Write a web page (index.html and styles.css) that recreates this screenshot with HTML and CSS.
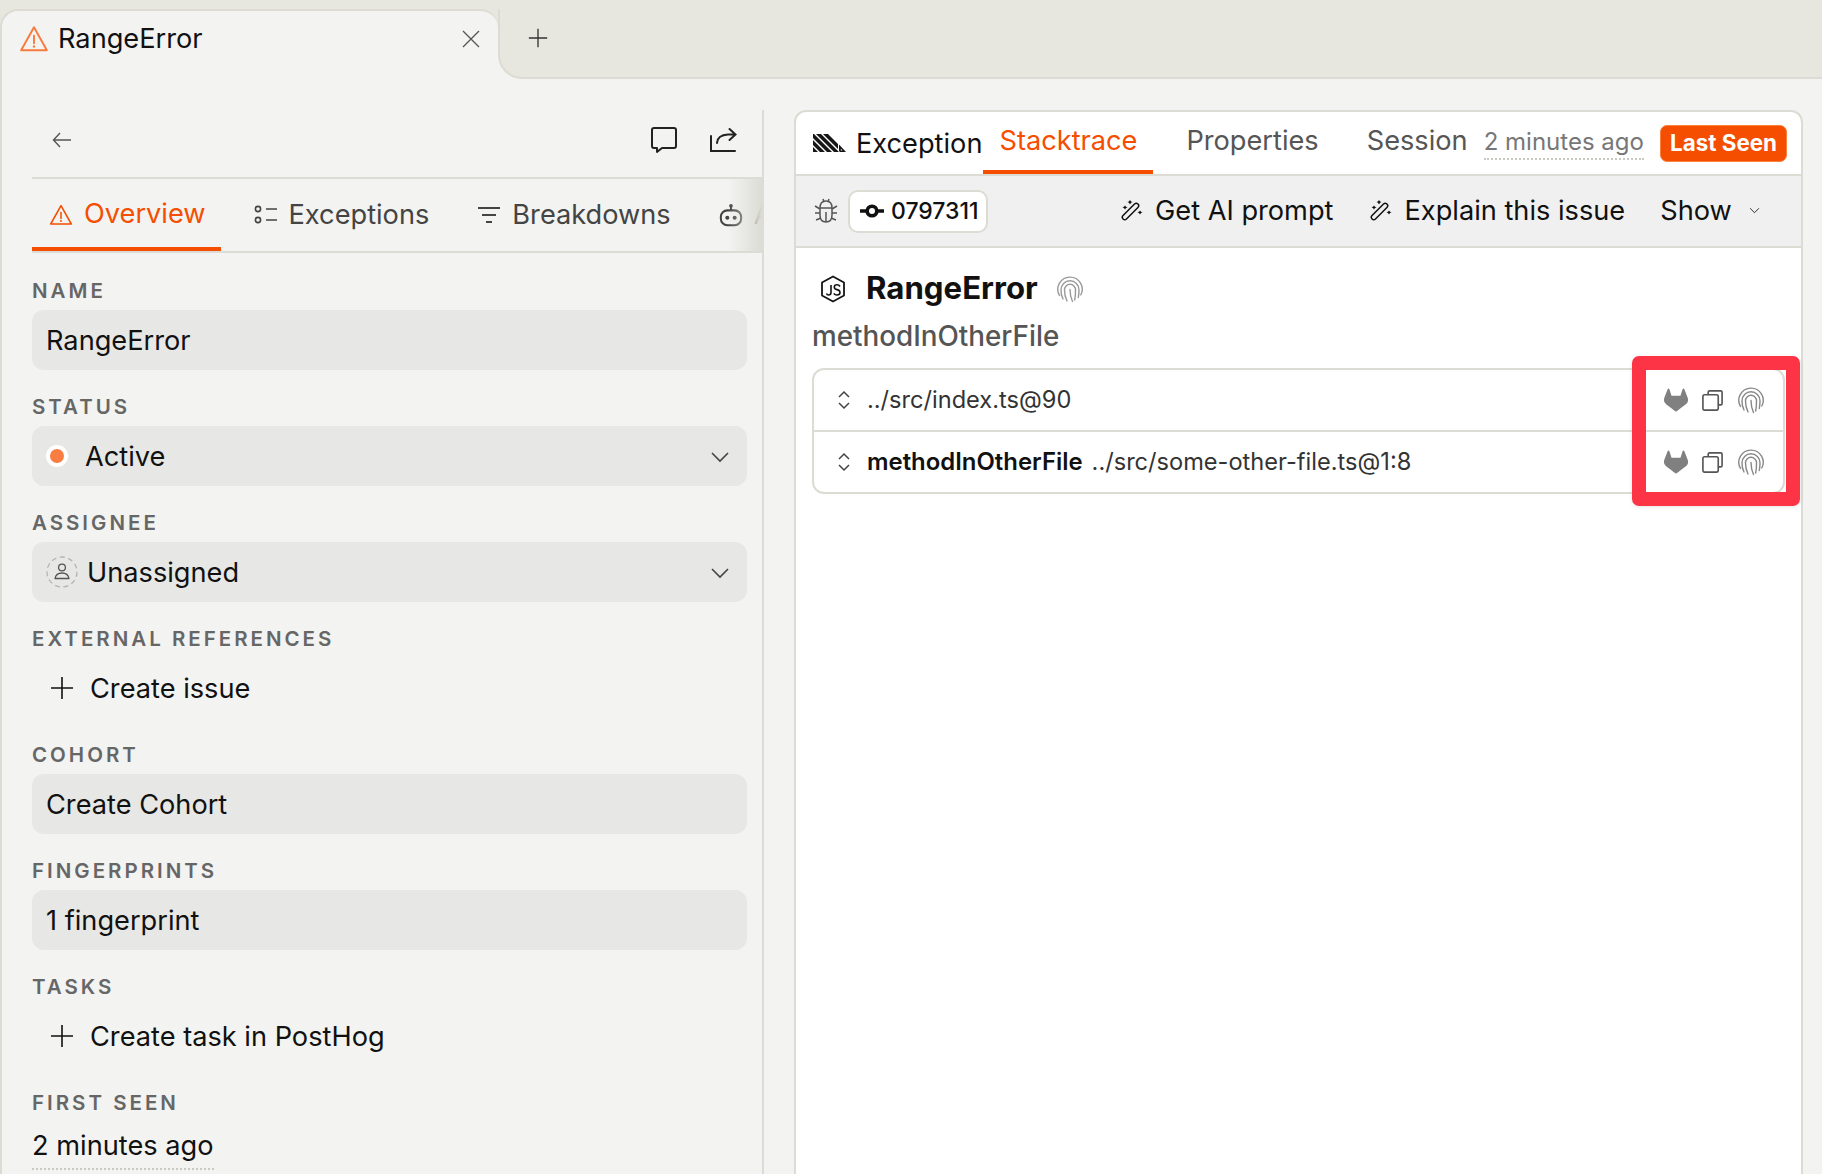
FILE: index.html
```html
<!DOCTYPE html>
<html lang="en">
	<head>
		<meta charset="UTF-8" />
		<title>RangeError</title>
		<link rel="stylesheet" href="styles.css">
	</head>
	<body>
		<svg class="defs" width="0" height="0">
			<defs>
				<symbol id="warn" viewBox="0 0 28 28">
					<path d="M14 3 L26 24.5 H2 Z" fill="none" stroke="currentColor" stroke-width="1.8" stroke-linejoin="round"/>
					<path d="M14 11 V18" stroke="currentColor" stroke-width="1.8" stroke-linecap="round"/>
					<circle cx="14" cy="21" r="1.1" fill="currentColor"/>
				</symbol>
				<symbol id="plus" viewBox="0 0 24 24">
					<path d="M12 1 V23 M1 12 H23" fill="none" stroke="currentColor" stroke-width="1.6"/>
				</symbol>
				<symbol id="chevron" viewBox="0 0 20 12">
					<path d="M2 2 L10 10 L18 2" fill="none" stroke="currentColor" stroke-width="1.6"/>
				</symbol>
				<symbol id="wand" viewBox="0 0 22 22">
					<rect x="-10.5" y="-2.4" width="21" height="4.8" rx="2.4" transform="translate(9.5 11.5) rotate(-45)" fill="none" stroke="currentColor" stroke-width="1.5"/>
					<path fill="currentColor" d="M9 0 L10 1.5 L11.5 2 L10 2.8 L9 4.5 L8 2.8 L6.5 2 L8 1.5 Z M4 5.5 L5 6.8 L6.5 7.3 L5 8 L4 9.5 L3 8 L1.5 7.3 L3 6.8 Z M19 10.5 L20 11.8 L21.5 12.3 L20 13 L19 14.5 L18 13 L16.5 12.3 L18 11.8 Z"/>
				</symbol>
				<symbol id="print" viewBox="0 0 28 28">
					<g fill="none" stroke="currentColor" stroke-width="1.4" stroke-linecap="round">
						<path d="M3.5 20.5 A12.2 12.2 0 1 1 24.8 20"/>
						<path d="M7 24 Q4.8 20 5 14.8 A9 9 0 0 1 23 14.8 Q23 18.5 22.3 22.5"/>
						<path d="M11 26 Q8.4 21 8.5 14.8 A5.5 5.5 0 0 1 19.5 14.8 Q19.6 20 18.7 25"/>
						<path d="M14 14.5 Q14 21 16.5 26.5"/>
					</g>
				</symbol>
				<symbol id="gitlab" viewBox="0 0 24 24">
					<path fill="currentColor" d="M23.6 9.6 L23.57 9.5 20.3 1 a.85.85 0 0 0-1.62.09 L16.47 7.85 H7.53 L5.32 1.09 a.85.85 0 0 0-1.62-.09 L.43 9.5 .4 9.6 a6.07 6.07 0 0 0 2.01 7.01 L7.4 20.35 9.86 22.2 l1.5 1.13 a1 1 0 0 0 1.22 0 l1.5-1.13 2.46-1.86 5.02-3.76 a6.07 6.07 0 0 0 2.04-6.98z"/>
				</symbol>
				<symbol id="copy" viewBox="0 0 24 24">
					<path d="M7.5 6 V3.5 A1.5 1.5 0 0 1 9 2 H20.5 A1.5 1.5 0 0 1 22 3.5 V15 A1.5 1.5 0 0 1 20.5 16.5 H18" fill="none" stroke="currentColor" stroke-width="1.7"/>
					<rect x="2" y="6" width="16" height="16" rx="1.8" fill="none" stroke="currentColor" stroke-width="1.7"/>
				</symbol>
				<symbol id="updown" viewBox="0 0 14 20">
					<path d="M2 7 L7 2 L12 7 M2 13 L7 18 L12 13" fill="none" stroke="currentColor" stroke-width="1.5"/>
				</symbol>
			</defs>
		</svg>

		<div class="tabbar">
			<div class="tab">
				<svg class="tab-warn"><use href="#warn"/></svg>
				<span class="tab-title">RangeError</span>
				<svg class="tab-close" viewBox="0 0 18 18"><path d="M1 1 L17 17 M17 1 L1 17" fill="none" stroke="currentColor" stroke-width="1.3"/></svg>
			</div>
			<div class="tab-rest">
				<svg class="tab-plus"><use href="#plus"/></svg>
			</div>
		</div>

		<div class="main">
			<div class="side">
				<div class="side-top">
					<svg class="back" viewBox="0 0 20 16"><path d="M8 1 L1.5 8 L8 15 M1.5 8 H19" fill="none" stroke="currentColor" stroke-width="1.4"/></svg>
					<div class="side-actions">
						<svg class="act" viewBox="0 0 28 28"><path d="M2 4 Q2 2 4 2 H24 Q26 2 26 4 V20 Q26 22 24 22 H12 L7 26 V22 H4 Q2 22 2 20 Z" fill="none" stroke="currentColor" stroke-width="2" stroke-linejoin="round"/></svg>
						<svg class="act" viewBox="0 0 28 28"><path d="M2 10 V25 H26" fill="none" stroke="currentColor" stroke-width="2" stroke-linecap="round"/><path d="M8 17 Q8.5 9 19 8.5 H26 M20.5 3 L26.5 8.5 L20.5 14" fill="none" stroke="currentColor" stroke-width="2" stroke-linecap="round"/></svg>
					</div>
				</div>
				<div class="side-tabs">
					<div class="stab active">
						<svg class="stab-icon"><use href="#warn"/></svg>Overview
					</div>
					<div class="stab">
						<svg class="stab-icon" viewBox="0 0 24 24"><g fill="none" stroke="currentColor" stroke-width="1.6"><circle cx="4" cy="6" r="2.6"/><circle cx="4" cy="17" r="2.6"/><path d="M12 6 H23 M12 17 H23"/></g></svg>Exceptions
					</div>
					<div class="stab">
						<svg class="stab-icon" viewBox="0 0 24 24"><path d="M1 5 H23 M5 12 H19 M9 19 H15" fill="none" stroke="currentColor" stroke-width="2"/></svg>Breakdowns
					</div>
					<div class="stab">
						<svg class="stab-icon" viewBox="0 0 26 26"><g fill="none" stroke="currentColor" stroke-width="2.2"><path d="M13 3 V8"/><rect x="2" y="8" width="22" height="16" rx="7"/></g><circle cx="13" cy="3" r="2" fill="currentColor"/><circle cx="9" cy="16" r="2.2" fill="currentColor"/><circle cx="17" cy="16" r="2.2" fill="currentColor"/></svg>AI
					</div>
					<div class="fade"></div>
				</div>

				<div class="field">
					<div class="label">Name</div>
					<div class="box">RangeError</div>
				</div>
				<div class="field">
					<div class="label">Status</div>
					<div class="box">
						<span class="dot"></span><span class="status-text">Active</span>
						<svg class="chev"><use href="#chevron"/></svg>
					</div>
				</div>
				<div class="field">
					<div class="label">Assignee</div>
					<div class="box">
						<svg class="avatar" viewBox="0 0 32 32">
							<circle cx="16" cy="16" r="15" fill="none" stroke="#b5b5b0" stroke-width="1.3" stroke-dasharray="5 3.5"/>
							<circle cx="16" cy="11.5" r="3.4" fill="none" stroke="#555" stroke-width="1.3"/>
							<path d="M9 22.5 Q10 17 16 17 Q22 17 23 22.5 Z" fill="none" stroke="#555" stroke-width="1.3" stroke-linejoin="round"/>
						</svg>
						<span class="assignee-text">Unassigned</span>
						<svg class="chev"><use href="#chevron"/></svg>
					</div>
				</div>
				<div class="field">
					<div class="label">External references</div>
					<div class="box plain"><svg class="add"><use href="#plus"/></svg>Create issue</div>
				</div>
				<div class="field">
					<div class="label">Cohort</div>
					<div class="box">Create Cohort</div>
				</div>
				<div class="field">
					<div class="label">Fingerprints</div>
					<div class="box">1 fingerprint</div>
				</div>
				<div class="field">
					<div class="label">Tasks</div>
					<div class="box plain"><svg class="add"><use href="#plus"/></svg>Create task in PostHog</div>
				</div>
				<div class="field">
					<div class="label">First seen</div>
					<div class="seen"><span>2 minutes ago</span></div>
				</div>
			</div>

			<div class="card">
				<div class="card-head">
					<svg class="hog" viewBox="0 0 33 18">
						<path fill="#151515" fill-rule="evenodd" d="M0 13 L5 18 H0 Z M0 6 L12 18 H7 L0 11 Z M0 0 H1 L19 18 H14 L0 4 Z M3 0 H8 L26 18 H21 Z M10 0 H15 L25 10 V15 Z M33 18 H27 L26 17 V10.5 Z M29.5 16.5 H27.8 V14.8 Z"/>
					</svg>
					<span class="head-name">Exception</span>
					<span class="ctab active">Stacktrace</span>
					<span class="ctab props">Properties</span>
					<span class="ctab session">Session</span>
					<span class="ago">2 minutes ago</span>
					<span class="badge">Last Seen</span>
				</div>
				<div class="toolbar">
					<svg class="bug" viewBox="0 0 24 26"><g fill="none" stroke="currentColor" stroke-width="1.5"><path d="M6 10 Q6 3 12 3 Q18 3 18 10 V17 Q18 24 12 24 Q6 24 6 17 Z"/><path d="M6 10 H18 M12 14 V24 M9 1 L10 4 M15 1 L14 4 M1 8 L6 11 M23 8 L18 11 M1 15 H6 M23 15 H18 M2 22 L7 20 M22 22 L17 20"/></g></svg>
					<span class="commit">
						<svg class="commit-icon" viewBox="0 0 24 14"><circle cx="12" cy="7" r="4.8" fill="none" stroke="currentColor" stroke-width="3.6"/><path d="M0 7 H7 M17 7 H24" stroke="currentColor" stroke-width="3.6"/></svg><span class="sha">0797311</span>
					</span>
					<span class="tool first"><svg class="wand"><use href="#wand"/></svg>Get AI prompt</span>
					<span class="tool"><svg class="wand"><use href="#wand"/></svg>Explain this issue</span>
					<span class="tool show">Show<svg class="show-chev"><use href="#chevron"/></svg></span>
				</div>
				<div class="body">
					<div class="title-row">
						<svg class="js" viewBox="0 0 26 28">
							<path d="M13 1.5 L24 7.5 V20.5 L13 26.5 L2 20.5 V7.5 Z" fill="none" stroke="#151515" stroke-width="1.8" stroke-linejoin="round"/>
							<path d="M11 10 V17.5 Q11 20 8.5 20 Q7 20 6.5 18.5 M20 11.5 Q19 9.8 17 9.8 Q14.3 9.8 14.3 12 Q14.3 14 17 14.6 Q20 15.3 20 17.5 Q20 20 17 20 Q14.8 20 13.8 18.3" fill="none" stroke="#151515" stroke-width="1.6"/>
						</svg>
						<span class="title">RangeError</span>
						<svg class="title-print"><use href="#print"/></svg>
					</div>
					<div class="subtitle">methodInOtherFile</div>
					<div class="frames">
						<div class="frame">
							<svg class="updown"><use href="#updown"/></svg>
							<span class="path">../src/index.ts@90</span>
							<span class="frame-icons">
								<svg class="gitlab"><use href="#gitlab"/></svg>
								<svg class="copy"><use href="#copy"/></svg>
								<svg class="print"><use href="#print"/></svg>
							</span>
						</div>
						<div class="frame">
							<svg class="updown"><use href="#updown"/></svg>
							<strong class="method">methodInOtherFile</strong>
							<span class="path">../src/some-other-file.ts@1:8</span>
							<span class="frame-icons">
								<svg class="gitlab"><use href="#gitlab"/></svg>
								<svg class="copy"><use href="#copy"/></svg>
								<svg class="print"><use href="#print"/></svg>
							</span>
						</div>
						<div class="highlight"></div>
					</div>
				</div>
			</div>
		</div>
	</body>
</html>
```

FILE: styles.css
```css
* {
	box-sizing: border-box;
}
html, body {
	margin: 0;
	height: 1174px;
	overflow: hidden;
}
body {
	background: #f3f3f1;
	color: #111;
	font: 27.2px/1.2 Inter, "Liberation Sans", sans-serif;
	display: flex;
	flex-direction: column;
}
.defs {
	position: absolute;
}

/* browser style tabs */
.tabbar {
	height: 79px;
	flex: none;
	display: flex;
	align-items: flex-end;
	background: linear-gradient(to bottom, #e7e7df 40px, #f3f3f1 40px);
}
.tab {
	width: 498px;
	height: 70px;
	padding: 0 18px 12px 17px;
	display: flex;
	align-items: center;
	background: #f3f3f1;
	border: 2px solid #dcdcd4;
	border-bottom: 0;
	border-right: 0;
	border-radius: 18px 18px 0 0;
}
.tab-warn {
	width: 30px;
	height: 30px;
	color: #f87b3e;
	margin-right: 9px;
}
.tab-title {
	flex: 1;
}
.tab-close {
	width: 18px;
	height: 18px;
	color: #555;
}
.tab-rest {
	flex: 1;
	height: 70px;
	padding: 0 0 11px 28px;
	display: flex;
	align-items: center;
	background: #e7e7df;
	border-left: 2px solid #dcdcd4;
	border-bottom: 2px solid #dcdcd4;
	border-bottom-left-radius: 24px;
}
.tab-plus {
	width: 20px;
	height: 20px;
	color: #333;
}

.main {
	flex: 1;
	display: flex;
	min-height: 0;
	border-left: 2px solid #dcdcd4;
}

/* left column */
.side {
	width: 762px;
	flex: none;
	margin-top: 31px;
	padding-left: 30px;
	border-right: 2px solid #dcdcd4;
}
.side-top {
	height: 69px;
	padding: 0 25px 8px 20px;
	display: flex;
	align-items: center;
	justify-content: space-between;
	border-bottom: 2px solid #dcdcd4;
}
.back {
	width: 20px;
	height: 16px;
	color: #555;
}
.side-actions {
	display: flex;
	gap: 31px;
}
.act {
	width: 28px;
	height: 28px;
	color: #222;
}
.side-tabs {
	height: 74px;
	display: flex;
	overflow: hidden;
	position: relative;
	border-bottom: 2px solid #dcdcd4;
	margin-bottom: 25px;
}
.stab {
	flex: none;
	height: 72px;
	padding: 0 15px 0 17px;
	margin-right: 16px;
	display: flex;
	align-items: center;
	color: #444;
}
.stab.active {
	color: #f54e00;
	border-bottom: 4px solid #f54e00;
	padding-top: 3px;
	margin-right: 16px;
}
.stab-icon {
	width: 24px;
	height: 24px;
	margin-right: 11px;
}
.fade {
	position: absolute;
	right: 0;
	top: 0;
	bottom: 0;
	width: 34px;
	background: linear-gradient(to right, rgba(243, 243, 241, 0), #dcdcd6);
}
.field {
	padding-right: 15px;
	height: 116px;
}
.label {
	height: 24px;
	padding-top: 1px;
	font-size: 20.5px;
	line-height: 24px;
	font-weight: 600;
	letter-spacing: 3px;
	text-transform: uppercase;
	color: #666;
}
.box {
	height: 60px;
	margin-top: 8px;
	padding: 2px 17px 0 14px;
	display: flex;
	align-items: center;
	border-radius: 12px;
	background: #e7e7e5;
}
.box.plain {
	background: none;
}
.dot {
	width: 22px;
	height: 22px;
	margin-right: 17px;
	margin-top: -2px;
	border-radius: 50%;
	background: #f97c40;
	border: 4px solid #fff;
}
.status-text, .assignee-text {
	flex: 1;
}
.chev {
	width: 20px;
	height: 12px;
	color: #444;
}
.avatar {
	width: 32px;
	height: 32px;
	margin-top: -2px;
	margin-right: 9px;
}
.add {
	width: 24px;
	height: 24px;
	margin: -2px 16px 0 4px;
}
.seen {
	margin-top: 16px;
}
.seen span {
	display: inline-block;
	padding-bottom: 5px;
	border-bottom: 2px dotted #c9c9c4;
}

/* right card */
.card {
	flex: 1;
	margin: 31px 19px 0 30px;
	background: #fff;
	border: 2px solid #dcdcd4;
	border-bottom: 0;
	border-radius: 12px 12px 0 0;
	display: flex;
	flex-direction: column;
}
.card-head {
	height: 64px;
	flex: none;
	padding: 0 14px 0 17px;
	display: flex;
	align-items: center;
	border-bottom: 2px solid #dcdcd4;
}
.hog {
	width: 33px;
	height: 18px;
	margin-right: 10px;
}
.head-name {
	margin-top: 2px;
}
.ctab {
	height: 62px;
	padding: 0 16px 4px;
	display: flex;
	align-items: center;
	color: #555;
}
.ctab.active {
	color: #f54e00;
	margin-left: 1px;
	border-bottom: 4px solid #f54e00;
	padding-bottom: 0;
}
.ctab.props {
	margin-left: 17px;
}
.ctab.session {
	margin-left: 16px;
	padding-right: 0;
}
.ago {
	margin-left: 16px;
	margin-top: 2px;
	color: #777;
	font-size: 24px;
	padding-bottom: 2px;
	border-bottom: 2px dotted #c9c9c4;
}
.badge {
	margin-left: auto;
	height: 37px;
	padding: 0 9px;
	display: flex;
	align-items: center;
	font-size: 22.4px;
	font-weight: 700;
	color: #fff;
	background: #f54e00;
	border: 1px solid #f9823f;
	border-radius: 7px;
}
.toolbar {
	height: 72px;
	flex: none;
	padding: 0 0 0 18px;
	display: flex;
	align-items: center;
	background: #f0f0f0;
	border-bottom: 2px solid #dcdcd4;
}
.bug {
	width: 24px;
	height: 26px;
	color: #555;
	margin-right: 10px;
}
.commit {
	height: 43px;
	width: 140px;
	padding: 0 0 0 10px;
	display: flex;
	align-items: center;
	font-size: 23px;
	font-weight: 500;
	background: #fff;
	border: 2px solid #dcdcd4;
	border-radius: 10px;
}
.sha {
	padding-top: 2px;
}
.commit-icon {
	width: 24px;
	height: 14px;
	margin-right: 7px;
}
.tool {
	display: flex;
	align-items: center;
	margin-left: 37px;
}
.tool.first {
	margin-left: 133px;
}
.tool.show {
	margin-left: 35px;
}
.wand {
	width: 22px;
	height: 22px;
	margin-right: 12px;
}
.show-chev {
	width: 11px;
	height: 7px;
	margin-left: 17px;
}
.body {
	padding: 0 16px;
}
.title-row {
	height: 72px;
	padding: 10px 0 0 8px;
	display: flex;
	align-items: center;
}
.js {
	width: 26px;
	height: 28px;
	margin-right: 20px;
}
.title {
	font-size: 31.2px;
	font-weight: 700;
}
.title-print {
	width: 28px;
	height: 28px;
	margin-left: 18px;
	color: #999;
}
.subtitle {
	height: 34px;
	line-height: 32px;
	font-size: 27.8px;
	font-weight: 500;
	color: #555;
}
.frames {
	margin-top: 14px;
	position: relative;
	border: 2px solid #dcdcd4;
	border-radius: 12px;
}
.frame {
	height: 60px;
	padding: 0 18px 0 23px;
	display: flex;
	align-items: center;
	font-size: 23.6px;
}
.frame + .frame {
	height: 62px;
	border-top: 2px solid #dcdcd4;
}
.updown {
	width: 14px;
	height: 20px;
	margin-right: 16px;
	color: #444;
}
.method {
	font-size: 23.9px;
	font-weight: 600;
	margin-right: 9px;
}
.path {
	color: #333;
}
.frame-icons {
	margin-left: auto;
	display: flex;
	align-items: center;
	gap: 13px;
}
.gitlab {
	width: 24px;
	height: 24px;
	color: #808080;
}
.copy {
	width: 23px;
	height: 23px;
	color: #555;
}
.print {
	width: 28px;
	height: 28px;
	color: #888;
}
.highlight {
	position: absolute;
	top: -14px;
	right: -17px;
	width: 168px;
	height: 150px;
	border: 14px solid #fd3446;
	border-radius: 7px;
	box-shadow: 0 1px 4px rgba(0, 0, 0, 0.1);
}
```
